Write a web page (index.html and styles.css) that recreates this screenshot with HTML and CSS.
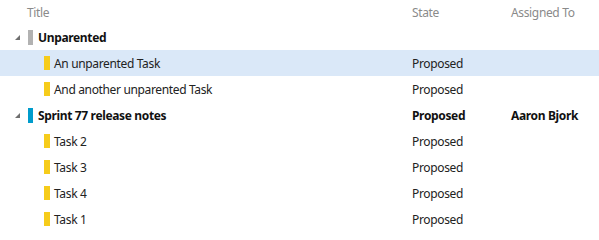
FILE: index.html
```html
<!DOCTYPE html>
<html lang="en">
<head>
  <meta charset="UTF-8">
  <title>Work items</title>
  <link rel="stylesheet" href="styles.css">
</head>
<body>
  <div class="grid">
    <div class="row header">
      <div class="cell title">Title</div>
      <div class="cell state">State</div>
      <div class="cell assigned">Assigned To</div>
    </div>

    <div class="row parent">
      <div class="cell title"><span class="toggle"></span><span class="bar gray"></span>Unparented</div>
      <div class="cell state"></div>
      <div class="cell assigned"></div>
    </div>
    <div class="row child selected">
      <div class="cell title"><span class="bar yellow"></span>An unparented Task</div>
      <div class="cell state">Proposed</div>
      <div class="cell assigned"></div>
    </div>
    <div class="row child">
      <div class="cell title"><span class="bar yellow"></span>And another unparented Task</div>
      <div class="cell state">Proposed</div>
      <div class="cell assigned"></div>
    </div>

    <div class="row parent">
      <div class="cell title"><span class="toggle"></span><span class="bar blue"></span>Sprint 77 release notes</div>
      <div class="cell state">Proposed</div>
      <div class="cell assigned">Aaron Bjork</div>
    </div>
    <div class="row child">
      <div class="cell title"><span class="bar yellow"></span>Task 2</div>
      <div class="cell state">Proposed</div>
      <div class="cell assigned"></div>
    </div>
    <div class="row child">
      <div class="cell title"><span class="bar yellow"></span>Task 3</div>
      <div class="cell state">Proposed</div>
      <div class="cell assigned"></div>
    </div>
    <div class="row child">
      <div class="cell title"><span class="bar yellow"></span>Task 4</div>
      <div class="cell state">Proposed</div>
      <div class="cell assigned"></div>
    </div>
    <div class="row child">
      <div class="cell title"><span class="bar yellow"></span>Task 1</div>
      <div class="cell state">Proposed</div>
      <div class="cell assigned"></div>
    </div>
  </div>
</body>
</html>
```
FILE: styles.css
```css
* {
  margin: 0;
  padding: 0;
  box-sizing: border-box;
}
body {
  background: white;
  color: #222;
  font-family: 'Noto Sans', 'Open Sans', sans-serif;
  font-size: 12px;
  letter-spacing: -0.35px;
}
.grid {
  width: 599px;
}
.row {
  display: flex;
  align-items: center;
  height: 26px;
}
.row.header {
  height: 24px;
  color: #8a8a8a;
}
.row.selected {
  background: #dae8f8;
}
.row.parent {
  font-weight: bold;
  color: #111;
}
.cell {
  display: flex;
  align-items: center;
  white-space: nowrap;
}
.cell.title {
  width: 412px;
  padding-left: 27px;
}
.cell.state {
  width: 99px;
}
.cell.assigned {
  flex: 1;
}
.parent .cell.title {
  padding-left: 15px;
}
.child .cell.title {
  padding-left: 44px;
}
.toggle {
  width: 0;
  height: 0;
  border-left: 5px solid transparent;
  border-bottom: 5px solid #6f6f6f;
  margin-right: 8px;
  margin-top: 1px;
}
.bar {
  display: inline-block;
  width: 5px;
  height: 15px;
  margin-right: 5px;
}
.bar.gray {
  background: #b2b2b2;
}
.bar.blue {
  background: #009ccc;
}
.bar.yellow {
  width: 6px;
  height: 14px;
  background: #f6cc1b;
  margin-right: 4px;
}
```
